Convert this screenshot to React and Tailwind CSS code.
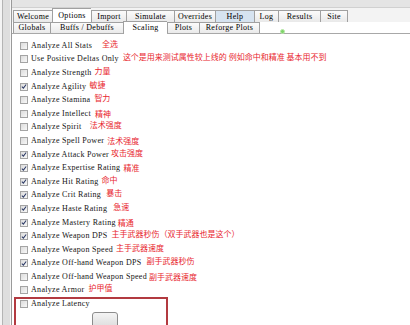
import React from 'react';

const topTabs = [
  { label: 'Welcome', w: 'w-[39px]' },
  { label: 'Options', w: 'w-[39px]', active: true },
  { label: 'Import', w: 'w-[35px]' },
  { label: 'Simulate', w: 'w-[48px]' },
  { label: 'Overrides', w: 'w-[41px]' },
  { label: 'Help', w: 'w-[39px]', hover: true },
  { label: 'Log', w: 'w-[24px]' },
  { label: 'Results', w: 'w-[42px]' },
  { label: 'Site', w: 'w-[28px]', last: true },
];

const subTabs = [
  { label: 'Globals', w: 'w-[37px]' },
  { label: 'Buffs / Debuffs', w: 'w-[73px]' },
  { label: 'Scaling', w: 'w-[44px]', active: true },
  { label: 'Plots', w: 'w-[32px]' },
  { label: 'Reforge Plots', w: 'w-[61px]', last: true },
];

// gap = space between the label and the red note in the screenshot
const rows = [
  { label: 'Analyze All Stats', note: '全选', gap: 'ml-[10px]' },
  { label: 'Use Positive Deltas Only', note: '这个是用来测试属性较上线的 例如命中和精准 基本用不到', gap: 'ml-[4px]' },
  { label: 'Analyze Strength', note: '力量', gap: 'ml-[3px]' },
  { label: 'Analyze Agility', note: '敏捷', gap: 'ml-[3px]', checked: true },
  { label: 'Analyze Stamina', note: '智力', gap: 'ml-[4px]' },
  { label: 'Analyze Intellect', note: '精神', gap: 'ml-[4px]', low: true },
  { label: 'Analyze Spirit', note: '法术强度', gap: 'ml-[8px]' },
  { label: 'Analyze Spell Power', note: '法术强度', gap: 'ml-[3px]', low: true },
  { label: 'Analyze Attack Power', note: '攻击强度', gap: 'ml-[2px]', checked: true },
  { label: 'Analyze Expertise Rating', note: '精准', gap: 'ml-[3px]', checked: true, low: true },
  { label: 'Analyze Hit Rating', note: '命中', gap: 'ml-[3px]', checked: true },
  { label: 'Analyze Crit Rating', note: '暴击', gap: 'ml-[5px]', checked: true },
  { label: 'Analyze Haste Rating', note: '急速', gap: 'ml-[6px]', checked: true },
  { label: 'Analyze Mastery Rating', note: '精通', gap: 'ml-[2px]', checked: true, low: true },
  { label: 'Analyze Weapon DPS', note: '主手武器秒伤（双手武器也是这个）', gap: 'ml-[4px]', checked: true },
  { label: 'Analyze Weapon Speed', note: '主手武器速度', gap: 'ml-[3px]' },
  { label: 'Analyze Off-hand Weapon DPS', note: '副手武器秒伤', gap: 'ml-[5px]', checked: true },
  { label: 'Analyze Off-hand Weapon Speed', note: '副手武器速度', gap: 'ml-[2px]', low: true },
  { label: 'Analyze Armor', note: '护甲值', gap: 'ml-[4px]' },
  { label: 'Analyze Latency', note: '' },
];

function Checkbox({ checked }) {
  return (
    <div className="w-[8px] h-[8px] shrink-0 border border-[#a4a4a4] bg-gradient-to-br from-[#dcdcdc] to-[#f8f8f8] flex items-center justify-center">
      {checked && (
        <svg width="7" height="7" viewBox="0 0 7 7">
          <path d="M1 3.6 L2.8 5.4 L6 1.2" fill="none" stroke="#2c3a66" strokeWidth="1.2" />
        </svg>
      )}
    </div>
  );
}

export default function App() {
  return (
    <div className="relative w-[410px] h-[325px] overflow-hidden bg-white flex text-black" style={{ fontFamily: '"Liberation Serif", serif' }}>
      <div className="w-[12px] shrink-0 h-full bg-[#e6e6e6] flex">
        <div className="w-[2px] bg-[#f4f4f4]" />
        <div className="w-[1px] bg-[#b4b4b4]" />
        <div className="flex-1 bg-[#dedede]" />
        <div className="w-[1px] bg-[#f6f6f6]" />
        <div className="w-[1px] bg-[#9a9a9a]" />
      </div>

      <div className="flex-1 flex flex-col">
        <div className="h-[8px] bg-[#e4e4e4] border-b border-[#d0d0d0]" />

        <div className="h-[14px] flex items-end pl-[1px] bg-[#f3f3f3]">
          {topTabs.map((t) => (
            <div
              key={t.label}
              className={`${t.w} ${t.active ? 'h-[14px] bg-white' : 'h-[12px]'} ${t.hover ? 'bg-[#d6e3f0]' : ''} ${!t.active && !t.hover ? 'bg-gradient-to-b from-[#fbfbfb] to-[#e9e9e9]' : ''} ${t.last ? 'border-r' : ''} border-l border-t border-[#a0a0a0] flex items-center justify-center text-[8px] leading-none tracking-[0.3px]`}
            >
              {t.label}
            </div>
          ))}
        </div>

        <div className="h-[12px] flex items-end pl-[1px] border-b border-[#a8a8a8] bg-white">
          {subTabs.map((t) => (
            <div
              key={t.label}
              className={`${t.w} ${t.active ? 'h-[13px] bg-white -mb-px relative z-10' : 'h-[11px] bg-gradient-to-b from-[#fbfbfb] to-[#eaeaea]'} ${t.last ? 'border-r' : ''} border-l border-t border-[#a0a0a0] flex items-center justify-center text-[8px] leading-none tracking-[0.3px]`}
            >
              {t.label}
            </div>
          ))}
          <div className="ml-[20px] mb-[-1px] w-[5px] h-[5px] rounded-full bg-[#7fd46a] border border-[#b8e8a8]" />
        </div>

        <div className="pt-[5px] pl-[8px] flex flex-col">
          {rows.map((r) => (
            <div key={r.label} className="h-[13.6px] flex items-center">
              <Checkbox checked={r.checked} />
              <span className="ml-[3px] text-[8px] leading-none tracking-[0.3px] text-[#141414] whitespace-nowrap">{r.label}</span>
              {r.note && (
                <span
                  className={`${r.gap} text-[8px] leading-none text-[#e8262e] whitespace-nowrap ${r.low ? 'translate-y-[0px]' : '-translate-y-[2px]'}`}
                  style={{ fontFamily: '"Noto Sans CJK SC", sans-serif' }}
                >
                  {r.note}
                </span>
              )}
            </div>
          ))}
        </div>
      </div>

      <div className="absolute left-[14px] top-[297px] w-[154px] h-[40px] border-2 border-[#b23a40]" />
      <div className="absolute left-[92px] top-[312px] w-[26px] h-[18px] rounded-[3px] border border-[#8c8c8c] bg-gradient-to-b from-[#f4f4f4] to-[#dadada]" />
    </div>
  );
}
